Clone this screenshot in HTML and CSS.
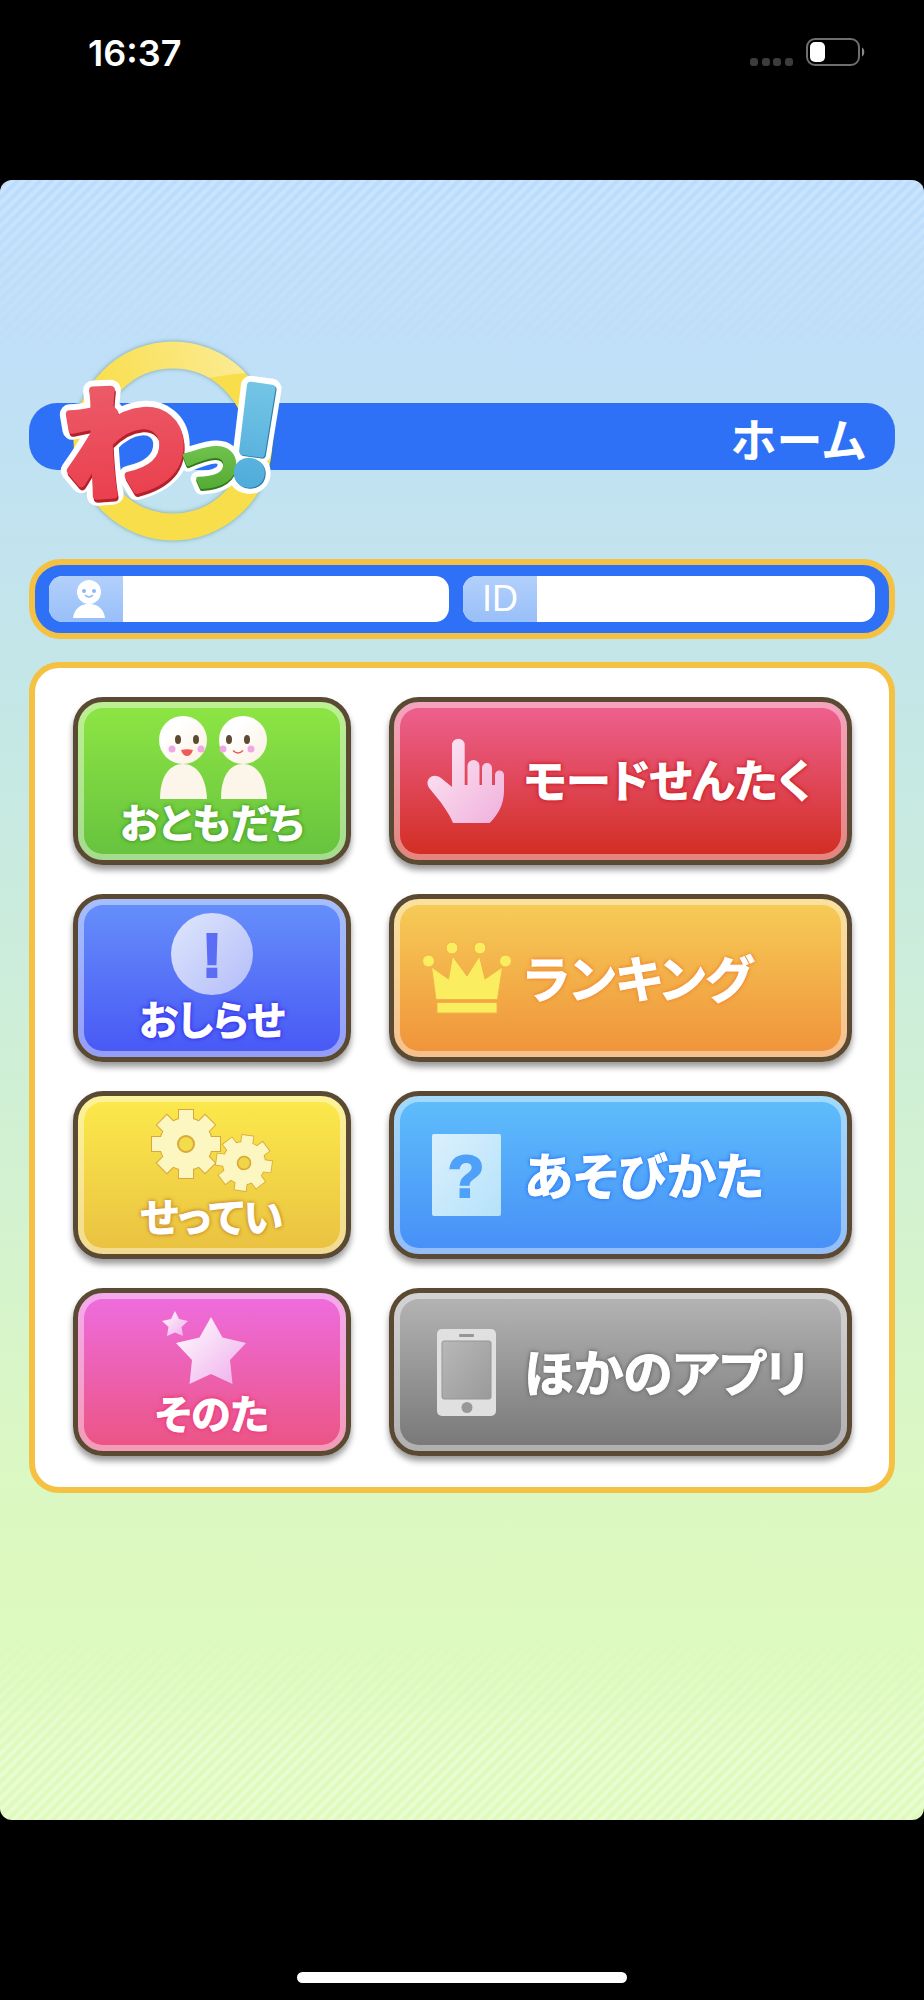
FILE: index.html
```html
<!doctype html>
<html lang="ja">
    <head>
        <title>わっ! ホーム</title>
        <meta charset="utf-8">
        <meta name="viewport" content="width=device-width, initial-scale=1">
        <link rel="stylesheet" href="styles.css">
    </head>
    <body>
        <div class="status-bar">
            <time class="clock">16:37</time>
            <div class="status-icons">
                <svg class="signal" width="44" height="10" viewBox="0 0 44 10">
                    <rect x="0" y="1" width="8" height="8" rx="3"/>
                    <rect x="12" y="1" width="8" height="8" rx="3"/>
                    <rect x="23" y="1" width="8" height="8" rx="3"/>
                    <rect x="35" y="1" width="8" height="8" rx="3"/>
                </svg>
                <svg class="battery" width="60" height="30" viewBox="0 0 60 30">
                    <rect x="1" y="2" width="52" height="26" rx="8" fill="none" stroke="#6e6e6e" stroke-width="2"/>
                    <rect x="4" y="5" width="15" height="20" rx="5" fill="#fff"/>
                    <path d="M56 10.5c3 1 3 8 0 9z" fill="#8a8a8a"/>
                </svg>
            </div>
        </div>

        <main class="app">
            <header class="title-bar">
                <svg class="logo" width="240" height="210" viewBox="0 0 240 210" role="img" aria-label="わっ!">
                    <defs>
                        <linearGradient id="red" x1="0" y1="0" x2="0" y2="1">
                            <stop offset="0.2" stop-color="#ec5b69"/>
                            <stop offset="1" stop-color="#ea3a48"/>
                        </linearGradient>
                        <linearGradient id="green" x1="0" y1="0" x2="0" y2="1">
                            <stop offset="0.3" stop-color="#76c852"/>
                            <stop offset="1" stop-color="#4da32c"/>
                        </linearGradient>
                        <linearGradient id="cyan" x1="0" y1="0" x2="0" y2="1">
                            <stop offset="0.1" stop-color="#78c8e6"/>
                            <stop offset="1" stop-color="#46a5d8"/>
                        </linearGradient>
                        <linearGradient id="shine" x1="0" y1="0.7" x2="1" y2="0.3">
                            <stop offset="0.2" stop-color="#fff" stop-opacity="0"/>
                            <stop offset="1" stop-color="#fff" stop-opacity="0.4"/>
                        </linearGradient>
                        <clipPath id="ring-top"><path d="M20 0H230V41Q130 38 20 102z"/></clipPath>
                        <text id="wa" class="logo-kana" x="15" y="156" font-size="122" transform="rotate(-4 80 110)">わ</text>
                        <text id="tsu" class="logo-kana" x="126" y="153" font-size="68">っ</text>
                        <text id="bang" class="logo-bang" x="177" y="151" font-size="132" transform="rotate(8 197 147)">!</text>
                    </defs>
                    <circle class="ring" cx="124" cy="110" r="86"/>
                    <circle clip-path="url(#ring-top)" cx="124" cy="110" r="86" fill="none" stroke="url(#shine)" stroke-width="27"/>
                    <g fill="#fff" stroke="#fff" stroke-width="20" stroke-linejoin="round">
                        <use href="#wa"/>
                        <use href="#tsu" stroke-width="15"/>
                        <use href="#bang"/>
                    </g>
                    <g stroke-width="8" stroke-linejoin="round">
                        <use href="#wa" y="3" x="1" fill="#b5202c" stroke="#b5202c"/>
                        <use href="#wa" fill="url(#red)" stroke="url(#red)"/>
                        <use href="#tsu" y="2" fill="#2f7a1c" stroke="#2f7a1c" stroke-width="4"/>
                        <use href="#tsu" fill="url(#green)" stroke="url(#green)" stroke-width="4"/>
                        <use href="#bang" x="1" y="1" fill="#2c7fa6" stroke="#2c7fa6"/>
                        <use href="#bang" fill="url(#cyan)" stroke="url(#cyan)"/>
                    </g>
                </svg>
                <h1>ホーム</h1>
            </header>

            <section class="user-bar">
                <div class="field">
                    <label for="userName" aria-label="なまえ">
                        <svg width="34" height="40" viewBox="0 0 34 40">
                            <circle cx="17" cy="13" r="12" fill="#fff"/>
                            <path d="M1 39C3 20 31 20 33 39z" fill="#fff"/>
                            <circle cx="12" cy="12" r="2" fill="#8db6f8"/>
                            <circle cx="22" cy="12" r="2" fill="#8db6f8"/>
                            <path d="M13 16q4 4 8 0" fill="none" stroke="#8db6f8" stroke-width="1.5"/>
                        </svg>
                    </label>
                    <input id="userName" type="text" readonly>
                </div>
                <div class="field">
                    <label for="userId">ID</label>
                    <input id="userId" type="text" readonly>
                </div>
            </section>

            <nav class="menu">
                <button class="tile small green">
                    <svg width="124" height="84" viewBox="0 0 124 84">
                        <defs>
                            <linearGradient id="skin" x1="0" y1="0" x2="1" y2="1">
                                <stop offset="0.3" stop-color="#fff"/>
                                <stop offset="1" stop-color="#fbf0e0"/>
                            </linearGradient>
                        </defs>
                        <g fill="url(#skin)">
                            <path d="M10 84C10 62 19 49 33 49S56 62 57 84z" fill="#fcf5e9"/>
                            <path d="M71 84C71 62 79 49 93 49S116 62 117 84z" fill="#fcf5e9"/>
                            <circle cx="33" cy="25" r="24"/>
                            <circle cx="93" cy="25" r="24"/>
                        </g>
                        <g fill="#5c4a32">
                            <ellipse cx="28" cy="24.500" rx="3" ry="4.500"/>
                            <ellipse cx="46" cy="24.500" rx="3" ry="4.500"/>
                            <ellipse cx="79" cy="24.500" rx="3" ry="4.500"/>
                            <ellipse cx="97" cy="24.500" rx="3" ry="4.500"/>
                        </g>
                        <g fill="#f0a8e4">
                            <circle cx="22" cy="34" r="3.500"/>
                            <circle cx="51" cy="34" r="3.500"/>
                            <circle cx="73" cy="34" r="3.500"/>
                            <circle cx="101" cy="34" r="3.500"/>
                        </g>
                        <path d="M31 35q6-1.500 12 0q-2 6-6 6t-6-6z" fill="#ee5a55"/>
                        <path d="M83 35.500q5 5 10 0" fill="none" stroke="#ee5a55" stroke-width="1.500"/>
                    </svg>
                    <span>おともだち</span>
                </button>
                <button class="tile long red">
                    <svg width="92" height="92" viewBox="0 0 92 92">
                        <defs>
                            <linearGradient id="hand" x1="0" y1="0" x2="1" y2="1">
                                <stop offset="0" stop-color="#fdeaf4"/>
                                <stop offset="1" stop-color="#f0b0dc"/>
                            </linearGradient>
                        </defs>
                        <path d="M33 88C28 76 20 66 10 54C3 46 12 36 21 43L32 52V10a6.300 6.300 0 0 1 12.700 0V50H47.500V31a6 6 0 0 1 12 0V50H62V33a5 5 0 0 1 10 0V50H75V40a4.500 4.500 0 0 1 9 0V56C84 70 77 81 69.500 88z" fill="url(#hand)"/>
                    </svg>
                    <span>モードせんたく</span>
                </button>

                <button class="tile small blue">
                    <svg width="124" height="84" viewBox="0 0 124 84">
                        <defs>
                            <linearGradient id="ball" x1="0" y1="0" x2="1" y2="1">
                                <stop offset="0" stop-color="#dfe6fd"/>
                                <stop offset="1" stop-color="#b3bdf8"/>
                            </linearGradient>
                        </defs>
                        <circle cx="62" cy="42" r="41" fill="url(#ball)"/>
                        <text class="mark" x="62" y="65" font-size="63" fill="#5b6cf5" stroke="#5b6cf5">!</text>
                    </svg>
                    <span>おしらせ</span>
                </button>
                <button class="tile orange">
                    <svg width="92" height="92" viewBox="0 0 92 92">
                        <g class="crown">
                            <circle cx="8.500" cy="29" r="6"/>
                            <circle cx="32" cy="16" r="6"/>
                            <circle cx="60" cy="16" r="6"/>
                            <circle cx="85.500" cy="29" r="6"/>
                            <path d="M11.500 35L28.500 47L32.500 24L47 44L59.500 24L65 47L82.500 35L77.500 67.500H16z"/>
                            <path d="M17 70.500H77V81H17z"/>
                        </g>
                    </svg>
                    <span>ランキング</span>
                </button>

                <button class="tile small yellow">
                    <svg width="124" height="84" viewBox="0 0 124 84">
                        <defs>
                            <g id="gear">
                                <circle r="26"/>
                                <path id="bar" d="M-7-34H7V34H-7z"/>
                                <use href="#bar" transform="rotate(45)"/>
                                <use href="#bar" transform="rotate(90)"/>
                                <use href="#bar" transform="rotate(135)"/>
                            </g>
                        </defs>
                        <g transform="translate(36 35)">
                            <use href="#gear" stroke="#d9a83a" stroke-width="2"/>
                            <use href="#gear" fill="#fcf6c0"/>
                            <circle r="8" fill="#f3dc4a" stroke="#d9a83a" stroke-width="2"/>
                        </g>
                        <g transform="translate(94 54) rotate(8) scale(0.810)">
                            <use href="#gear" stroke="#d9a83a" stroke-width="2"/>
                            <use href="#gear" fill="#fcf6c0"/>
                            <circle r="8" fill="#f0d548" stroke="#d9a83a" stroke-width="2"/>
                        </g>
                    </svg>
                    <span>せってい</span>
                </button>
                <button class="tile sky">
                    <svg width="92" height="92" viewBox="0 0 92 92">
                        <defs>
                            <linearGradient id="paper" x1="0" y1="0" x2="1" y2="1">
                                <stop offset="0" stop-color="#dbf0fd"/>
                                <stop offset="1" stop-color="#b5e2fa"/>
                            </linearGradient>
                        </defs>
                        <rect x="12" y="5" width="69" height="82" rx="2" fill="url(#paper)"/>
                        <text class="mark" x="46" y="68" font-size="60" fill="#4fa0f8" stroke="#4fa0f8">?</text>
                    </svg>
                    <span>あそびかた</span>
                </button>

                <button class="tile small pink">
                    <svg width="124" height="84" viewBox="0 0 124 84">
                        <defs>
                            <linearGradient id="star" x1="0" y1="0" x2="1" y2="1">
                                <stop offset="0" stop-color="#fff"/>
                                <stop offset="1" stop-color="#efacec"/>
                            </linearGradient>
                        </defs>
                        <g fill="url(#star)">
                            <path d="M61 11L72.500 31.500L96 37L80 54L82.500 78L61 68L39.500 78L42 54L26 37L49.500 31.500z"/>
                            <path d="M25 5L29 13L38 15L31.500 21L33 30L25 26.500L17 30L18.500 21L12 15L21 13z"/>
                        </g>
                    </svg>
                    <span>そのた</span>
                </button>
                <button class="tile gray">
                    <svg width="92" height="92" viewBox="0 0 92 92">
                        <defs>
                            <linearGradient id="screen" x1="0" y1="0" x2="1" y2="1">
                                <stop offset="0" stop-color="#b8b8b8"/>
                                <stop offset="1" stop-color="#9a9a9a"/>
                            </linearGradient>
                        </defs>
                        <rect x="17" y="3" width="59" height="87" rx="5" fill="#e0e0e0"/>
                        <rect x="22" y="15" width="49" height="58" rx="2" fill="url(#screen)" stroke="#969696"/>
                        <rect x="39" y="8" width="15" height="3" rx="1" fill="#969696"/>
                        <circle cx="47" cy="81.500" r="5.500" fill="#989898"/>
                    </svg>
                    <span>ほかのアプリ</span>
                </button>
            </nav>
        </main>

        <div class="home-area">
            <div class="home-indicator"></div>
        </div>
    </body>
</html>
```

FILE: styles.css
```css
body {
    margin: 0;
    min-height: 100vh;
    display: flex;
    flex-direction: column;
    background: #000;
    font-family: "Noto Sans CJK JP", sans-serif;
}

/* phone status bar */
.status-bar {
    height: 180px;
    box-sizing: border-box;
    padding: 31px 58px 0 88px;
    display: flex;
    justify-content: space-between;
    align-items: flex-start;
}
.clock {
    color: #fff;
    font: 600 36px/44px Inter, sans-serif;
}
.status-icons {
    display: flex;
    align-items: flex-end;
    gap: 12px;
    padding-top: 6px;
}
.signal {
    fill: #3c3c3c;
}

.app {
    position: relative;
    flex: 1;
    padding: 223px 29px 40px;
    border-radius: 12px;
    background: linear-gradient(#badcfd, #bfdff8 10%, #c3e5ea 27%, #c5e8e5 34%, #dcf8c2 80%, #defbba);
    overflow: hidden;
}
/* diagonal stripes, fading out towards the middle */
.app::before {
    content: "";
    position: absolute;
    inset: 0;
    background: repeating-linear-gradient(135deg, rgba(255, 255, 255, 0.36) 0 2px, transparent 4px 6px, rgba(255, 255, 255, 0.36) 8px);
    mask-image: linear-gradient(rgba(0, 0, 0, 0.7), transparent 11%, transparent 88%, #000 96%);
}

.title-bar {
    position: relative;
    height: 67px;
    padding: 0 28px;
    display: flex;
    align-items: center;
    justify-content: flex-end;
    border-radius: 28px;
    background: #2f71f6;
}
.title-bar h1 {
    margin: 0;
    color: #fff;
    font-size: 46px;
    line-height: 64px;
    font-weight: 700;
}
.logo {
    position: absolute;
    left: 20px;
    top: -72px;
    overflow: visible;
}
.ring {
    fill: none;
    stroke: #f9de4b;
    stroke-width: 27px;
    filter: drop-shadow(0 0 2px rgba(60, 120, 120, 0.6));
}
.logo-kana {
    font-family: "Noto Sans CJK JP", sans-serif;
    font-weight: 700;
}
.logo-bang {
    font-family: Inter, sans-serif;
    font-weight: 700;
}

.user-bar {
    position: relative;
    margin-top: 89px;
    padding: 11px 14px;
    display: grid;
    grid-template-columns: 400fr 412fr;
    gap: 14px;
    border: 6px solid #f4c143;
    border-radius: 32px;
    background: #2f71f6;
}
.field {
    display: flex;
    height: 46px;
    border-radius: 14px;
    background: #fff;
    overflow: hidden;
}
.field label {
    flex: 0 0 74px;
    display: flex;
    align-items: center;
    justify-content: center;
    background: linear-gradient(#b3d0fb, #98bff9);
    color: #fff;
    font: 36px/46px "Liberation Sans", sans-serif;
}
.field label svg {
    margin-left: 6px;
}
.field input {
    flex: 1;
    min-width: 0;
    padding: 0 12px;
    border: 0;
    background: none;
    font-size: 28px;
}

.menu {
    position: relative;
    margin-top: 23px;
    padding: 29px 37px 31px 38px;
    display: grid;
    grid-template-columns: 278fr 463fr;
    gap: 29px 38px;
    border: 6px solid #f4c143;
    border-radius: 30px;
    background: #fff;
}
.tile {
    height: 168px;
    padding: 0 0 0 26px;
    display: flex;
    align-items: center;
    gap: 12px;
    border: 5px solid #5b4a33;
    border-radius: 30px;
    background: linear-gradient(var(--from), var(--to)) padding-box;
    box-shadow: inset 0 0 0 6px rgba(255, 255, 255, 0.42), 0 5px 6px rgba(0, 0, 0, 0.4);
    color: #fff;
    font-family: inherit;
    font-size: 50px;
    line-height: 60px;
    font-weight: 700;
    font-feature-settings: "palt";
    white-space: nowrap;
    -webkit-text-stroke: 1px #fff;
    text-shadow: 0 0 3px var(--glow), 0 0 3px var(--glow), 0 0 4px var(--glow), 0 0 5px var(--glow);
    cursor: pointer;
}
.tile span {
    padding-bottom: 4px;
}
.tile.long {
    font-size: 45px;
}
.tile.small {
    flex-direction: column;
    gap: 0;
    padding: 13px 0 0;
    font-size: 40px;
    line-height: 44px;
}
.green { --from: #8ee644; --to: #66c23e; --glow: #4fa52e; }
.red { --from: #ee6292; --to: #d22c20; --glow: #cf2630; }
.blue { --from: #6690fa; --to: #4857f5; --glow: #3c38f0; }
.orange { --from: #f6cd58; --to: #f0923a; --glow: #ef8f38; }
.yellow { --from: #fcea4c; --to: #e9c141; --glow: #cf9630; }
.sky { --from: #5fbefb; --to: #468ff7; --glow: #3583f6; }
.pink { --from: #ee6de0; --to: #eb5482; --glow: #ec3f7c; }
.gray { --from: #b5b5b5; --to: #777; --glow: #737373; }

.mark {
    font-family: "Liberation Sans", sans-serif;
    font-weight: 700;
    text-anchor: middle;
    text-shadow: none;
    stroke-width: 2px;
    -webkit-text-stroke: 0;
}
.crown {
    fill: #fbed60;
    stroke: #f3b247;
    stroke-width: 1px;
}

.home-area {
    height: 180px;
    box-sizing: border-box;
    padding-bottom: 17px;
    display: flex;
    align-items: flex-end;
    justify-content: center;
}
.home-indicator {
    width: 330px;
    height: 11px;
    border-radius: 6px;
    background: #fff;
}
```
